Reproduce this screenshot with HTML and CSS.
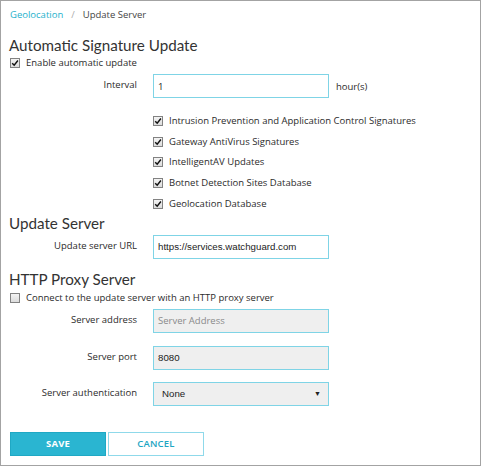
FILE: index.html
```html
<!DOCTYPE html>
<html>
<head>
<meta charset="utf-8">
<link rel="stylesheet" href="styles.css">
</head>
<body>
<div class="frame">
  <div class="crumbs"><a class="crumb-link">Geolocation</a><span class="sep">/</span><span class="crumb-cur">Update Server</span></div>

  <h2 class="section first">Automatic Signature Update</h2>
  <label class="check-row top enable"><span class="cb checked"><svg viewBox="0 0 10 10" width="8" height="8"><path d="M1.5 5.2 L4 7.8 L8.6 1.8" fill="none" stroke="#111" stroke-width="1.8"/></svg></span>Enable automatic update</label>

  <div class="field interval">
    <span class="lbl">Interval</span>
    <span class="input">1</span>
    <span class="unit">hour(s)</span>
  </div>

  <div class="checks">
    <label class="check-row"><span class="cb checked"><svg viewBox="0 0 10 10" width="8" height="8"><path d="M1.5 5.2 L4 7.8 L8.6 1.8" fill="none" stroke="#111" stroke-width="1.8"/></svg></span>Intrusion Prevention and Application Control Signatures</label>
    <label class="check-row"><span class="cb checked"><svg viewBox="0 0 10 10" width="8" height="8"><path d="M1.5 5.2 L4 7.8 L8.6 1.8" fill="none" stroke="#111" stroke-width="1.8"/></svg></span>Gateway AntiVirus Signatures</label>
    <label class="check-row"><span class="cb checked"><svg viewBox="0 0 10 10" width="8" height="8"><path d="M1.5 5.2 L4 7.8 L8.6 1.8" fill="none" stroke="#111" stroke-width="1.8"/></svg></span>IntelligentAV Updates</label>
    <label class="check-row"><span class="cb checked"><svg viewBox="0 0 10 10" width="8" height="8"><path d="M1.5 5.2 L4 7.8 L8.6 1.8" fill="none" stroke="#111" stroke-width="1.8"/></svg></span>Botnet Detection Sites Database</label>
    <label class="check-row"><span class="cb checked"><svg viewBox="0 0 10 10" width="8" height="8"><path d="M1.5 5.2 L4 7.8 L8.6 1.8" fill="none" stroke="#111" stroke-width="1.8"/></svg></span>Geolocation Database</label>
  </div>

  <h2 class="section s2">Update Server</h2>
  <div class="field url">
    <span class="lbl">Update server URL</span>
    <span class="input arial">https://services.watchguard.com</span>
  </div>

  <h2 class="section s3">HTTP Proxy Server</h2>
  <label class="check-row top proxy"><span class="cb"></span>Connect to the update server with an HTTP proxy server</label>

  <div class="field f-addr">
    <span class="lbl">Server address</span>
    <span class="input disabled placeholder">Server Address</span>
  </div>
  <div class="field f-port">
    <span class="lbl">Server port</span>
    <span class="input disabled arial">8080</span>
  </div>
  <div class="field f-auth">
    <span class="lbl">Server authentication</span>
    <span class="input disabled select arial"><span>None</span><span class="caret">&#9660;</span></span>
  </div>

  <div class="buttons">
    <button class="btn save">SAVE</button>
    <button class="btn cancel">CANCEL</button>
  </div>
</div>
</body>
</html>
```

FILE: styles.css
```css
* { box-sizing: border-box; }
html, body { margin: 0; padding: 0; background: #fff; }
body {
  font-family: "Open Sans", "DejaVu Sans", sans-serif;
  font-size: 9.5px;
  color: #2b2b2b;
}
.frame {
  width: 481px;
  height: 466px;
  border: 1px solid #a3a3a3;
  padding: 0 0 0 8px;
  display: flex;
  flex-direction: column;
}
.crumbs {
  margin-top: 7px;
  line-height: 14px;
  padding-left: 1px;
}
.crumb-link { color: #25b1cc; }
.sep { color: #aaa; margin: 0 8px; }
.crumb-cur { color: #444; }

.section {
  margin: 0;
  font-family: "Lato", "Open Sans", sans-serif;
  font-weight: 400;
  font-size: 15.2px;
  line-height: 20px;
  height: 20px;
  color: #333;
}
.section.first { margin-top: 13px; }
.section.s2 { margin-top: -1px; }
.section.s3 { margin-top: 10px; }

.check-row {
  display: flex;
  align-items: center;
  height: 20.7px;
  line-height: 14px;
}
.check-row.top { height: 14px; padding-left: 1px; }
.check-row.enable { margin-top: 1px; }
.check-row.proxy { margin-top: 2px; }
.cb {
  width: 10px;
  height: 10px;
  border: 1px solid #828282;
  background: linear-gradient(#f4f4f4, #dcdcdc);
  margin-right: 6px;
  display: inline-flex;
  align-items: center;
  justify-content: center;
  flex: none;
}
.cb svg { display: block; }

.field {
  display: flex;
  align-items: center;
}
.lbl {
  width: 128px;
  text-align: right;
  flex: none;
  margin-right: 16px;
  padding-bottom: 3px;
}
.input {
  width: 176px;
  height: 24px;
  border: 1px solid #7fd4e6;
  display: flex;
  align-items: center;
  padding: 0 4px;
  background: #fff;
  color: #222;
  flex: none;
}
.input.arial { font-family: "Liberation Sans", Arial, sans-serif; font-size: 9.7px; }
.input.disabled { background: #efefef; }
.input.placeholder { color: #8a8a8a; }
.input.select { justify-content: space-between; padding-left: 8px; padding-right: 7px; }
.caret { font-size: 7px; color: #222; }
.unit { margin-left: 7px; }

.interval { margin-top: 4px; }
.checks { margin-top: 12.5px; padding-left: 144px; }
.url { margin-top: 2px; }
.f-addr { margin-top: 4px; }
.f-port { margin-top: 13px; }
.f-auth { margin-top: 12px; }

.buttons {
  margin-top: 26px;
  display: flex;
  gap: 2px;
  padding-left: 1px;
}
.btn {
  width: 96px;
  height: 24px;
  font-family: "Open Sans", sans-serif;
  font-weight: 700;
  font-size: 9.5px;
  letter-spacing: 0.2px;
  cursor: pointer;
  margin: 0;
}
.save {
  background: #2ab5d1;
  border: 1px solid #1fa8c4;
  color: #fff;
}
.cancel {
  background: #fff;
  border: 1px solid #8fd9ea;
  color: #1ea6c3;
  font-weight: 600;
}
```
